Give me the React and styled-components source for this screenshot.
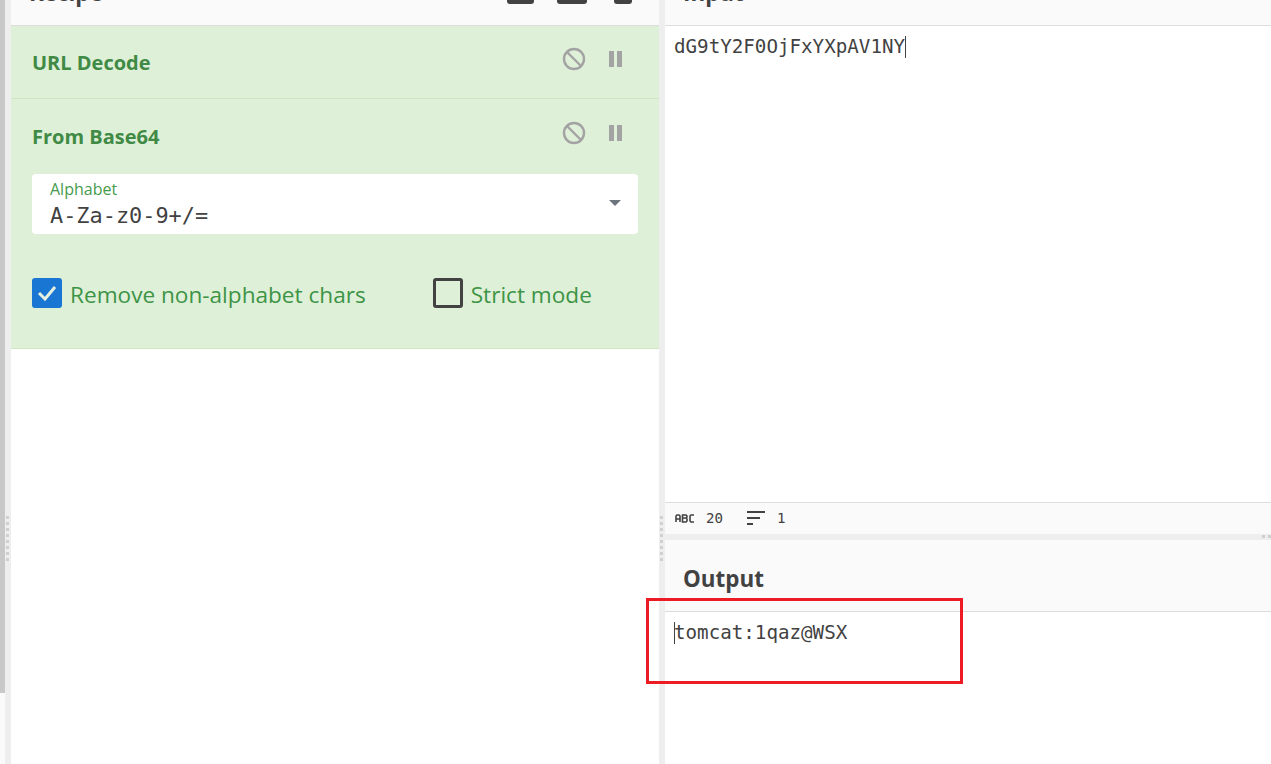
import React from "react";
import styled, { createGlobalStyle } from "styled-components";

const Global = createGlobalStyle`
  html, body { margin: 0; padding: 0; background: #fff; }
  #root { width: 1271px; height: 764px; overflow: hidden; }
  * { box-sizing: border-box; }
`;
const UI = `"Open Sans", "Noto Sans", sans-serif`;
const MONO = `"DejaVu Sans Mono", "Liberation Mono", monospace`;

const Page = styled.div`
  width: 1271px; height: 764px; display: grid;
  grid-template-columns: 5px 6px 648px 6px 606px;
  background: #fff; position: relative; overflow: hidden;
  font-family: ${UI};
`;
const Edge = styled.div`
  display: grid; grid-template-rows: 693px 1fr;
  &::before { content: ""; background: #c8c8c8; }
  &::after { content: ""; background: #fafafa; }
`;
const Gutter = styled.div`
  background: #eee; position: relative;
`;
const Dots = styled.div`
  position: absolute; left: ${p => p.$left}px; top: ${p => p.$top}px;
  display: flex; flex-direction: column; gap: 3px;
  span { width: 3px; height: 3px; background: #d0d0d0; display: block; }
`;
const Column = styled.div`
  display: flex; flex-direction: column; min-width: 0; height: 100%;
`;
const TopBar = styled.div`
  height: 26px; flex: none; background: #fafafa; border-bottom: 1px solid #ddd;
  display: flex; align-items: flex-end; justify-content: space-between;
  padding: 0 27px 0 18px; overflow: hidden;
`;
const Title = styled.div`
  font-weight: 700; font-size: 22.4px; line-height: 30px; color: #424242; flex: none;
`;
const TopTitle = styled(Title)`
  margin-bottom: 17px;
`;
const TopIcons = styled.div`
  display: flex; align-items: flex-start; margin-bottom: 18px; height: 7px;
`;
const TopGlyph = styled.span`
  display: block; width: ${p => p.$w}px; height: 4px; background: #424242;
  border-radius: 0 0 3px 3px;
  margin-left: ${p => p.$gap || 0}px;
`;
const Op = styled.section`
  background: #dff0d8; border-bottom: 1px solid #cfe6c0;
  height: ${p => p.$h}px; flex: none; padding: 0 21px;
`;
const OpHead = styled.div`
  height: ${p => p.$h}px; display: flex; align-items: center; justify-content: space-between;
`;
const OpName = styled.div`
  font-weight: 700; font-size: 20px; color: #3f8a45; line-height: 28px;
`;
const OpControls = styled.div`
  display: flex; align-items: center; gap: 22px; margin: ${p => p.$mt}px 14px 0 0;
`;
const SelectBox = styled.div`
  position: relative; height: 60px; background: #fff; border-radius: 4px;
  padding: 5px 18px 0; margin-top: -1px;
`;
const FieldLabel = styled.div`
  font-size: 16px; line-height: 20px; color: #469b4c;
`;
const FieldValue = styled.div`
  font-family: ${MONO}; font-size: 21.9px; line-height: 30px; color: #424242; margin-top: 2px;
`;
const Caret = styled.div`
  position: absolute; right: 17px; top: 26px; width: 0; height: 0;
  border-left: 6px solid transparent; border-right: 6px solid transparent;
  border-top: 6px solid #6c757d;
`;
const Checks = styled.div`
  display: flex; align-items: center; margin-top: 44px; height: 30px;
`;
const Check = styled.label`
  display: flex; align-items: center; gap: 8px; font-size: 22.6px; color: #3d9446;
  margin-left: ${p => p.$ml || 0}px; line-height: 30px;
`;
const CheckText = styled.span`
  padding-top: 4px;
`;
const Box = styled.span`
  width: 30px; height: 30px; border-radius: 3px; display: flex; align-items: center; justify-content: center;
  background: ${p => p.$on ? "#1976d2" : "transparent"};
  border: ${p => p.$on ? "none" : "3px solid #424242"};
`;
const Body = styled.div`
  flex: 1; padding: 7px 9px; font-family: ${MONO}; font-size: 19.2px; line-height: 28px; color: #424242;
  white-space: pre; position: relative;
`;
const Caretline = styled.span`
  display: inline-block; width: 1px; height: 22px; background: #424242; vertical-align: -5px;
  margin-right: ${p => p.$lead ? -1 : 0}px;
`;
const InputBody = styled(Body)`
  flex: none; height: 476px;
`;
const Status = styled.div`
  height: 32px; flex: none; background: #fafafa; border-top: 1px solid #ddd;
  display: flex; align-items: center; padding: 0 10px 2px; gap: 11px;
  font-family: ${MONO}; font-size: 14.1px; color: #424242;
`;
const StatusGap = styled.span`
  width: 1px;
`;
const Divider = styled.div`
  height: 6px; flex: none; background: #eee; position: relative;
`;
const HDots = styled.div`
  position: absolute; right: 0; top: 1px; display: flex; gap: 3px;
  span { width: 3px; height: 3px; background: #d0d0d0; display: block; }
`;
const OutHead = styled.div`
  height: 72px; flex: none; background: #fafafa; border-bottom: 1px solid #ddd;
  padding: 24px 18px 0;
`;
const Highlight = styled.div`
  position: absolute; left: 646px; top: 598px; width: 317px; height: 86px;
  border: 3px solid #ed1c24; pointer-events: none;
`;
const BanIcon = () => (
  <svg width="24" height="24" viewBox="0 0 24 24" fill="none" stroke="#a3a3a3" strokeWidth="2.4">
    <circle cx="12" cy="12" r="10" /><line x1="5" y1="5" x2="19" y2="19" />
  </svg>
);
const PauseIcon = () => (
  <svg width="16" height="18" viewBox="0 0 16 18" fill="#a3a3a3">
    <rect x="1" y="1" width="5" height="16" /><rect x="9" y="1" width="5" height="16" />
  </svg>
);
const Tick = () => (
  <svg width="20" height="16" viewBox="0 0 20 16" fill="none" stroke="#e6f0e0" strokeWidth="3">
    <path d="M2 8l6 6L18 2" />
  </svg>
);
const AbcIcon = () => (
  <svg width="20" height="10" viewBox="0 0 20 10" fill="none" stroke="#424242" strokeWidth="1.6">
    <path d="M1 9V3l1-1h2l1 1v6M1 6h4M7.5 2H11l1 1v1l-1 1H7.5zM7.5 5H11l1 1v2l-1 1H7.5zM19 2h-3l-1 1v5l1 1h3" />
  </svg>
);
const LinesIcon = () => (
  <svg width="20" height="16" viewBox="0 0 20 16" fill="#424242">
    <rect x="1" y="1" width="18" height="2" /><rect x="1" y="7" width="13" height="2" /><rect x="1" y="13" width="6" height="2" />
  </svg>
);
const dots = n => Array.from({ length: n }, (_, i) => <span key={i} />);

export default function App() {
  return (
    <>
      <Global />
      <Page>
        <Edge />
        <Gutter><Dots $left={1} $top={516}>{dots(8)}</Dots></Gutter>
        <Column>
          <TopBar>
            <TopTitle>Recipe</TopTitle>
            <TopIcons>
              <TopGlyph $w={27} /><TopGlyph $w={30} $gap={23} /><TopGlyph $w={18} $gap={27} />
            </TopIcons>
          </TopBar>
          <Op $h={73}>
            <OpHead $h={73}>
              <OpName>URL Decode</OpName>
              <OpControls $mt={-8}><BanIcon /><PauseIcon /></OpControls>
            </OpHead>
          </Op>
          <Op $h={250}>
            <OpHead $h={76}>
              <OpName>From Base64</OpName>
              <OpControls $mt={-8}><BanIcon /><PauseIcon /></OpControls>
            </OpHead>
            <SelectBox>
              <FieldLabel>Alphabet</FieldLabel>
              <FieldValue>A-Za-z0-9+/=</FieldValue>
              <Caret />
            </SelectBox>
            <Checks>
              <Check><Box $on><Tick /></Box><CheckText>Remove non-alphabet chars</CheckText></Check>
              <Check $ml={67}><Box /><CheckText>Strict mode</CheckText></Check>
            </Checks>
          </Op>
        </Column>
        <Gutter><Dots $left={1} $top={516}>{dots(8)}</Dots></Gutter>
        <Column>
          <TopBar>
            <TopTitle>Input</TopTitle>
          </TopBar>
          <InputBody>dG9tY2F0OjFxYXpAV1NY<Caretline /></InputBody>
          <Status><AbcIcon /><span>20</span><StatusGap /><LinesIcon /><span>1</span></Status>
          <Divider><HDots>{dots(2)}</HDots></Divider>
          <OutHead><Title>Output</Title></OutHead>
          <Body><Caretline $lead />tomcat:1qaz@WSX</Body>
        </Column>
        <Highlight />
      </Page>
    </>
  );
}
